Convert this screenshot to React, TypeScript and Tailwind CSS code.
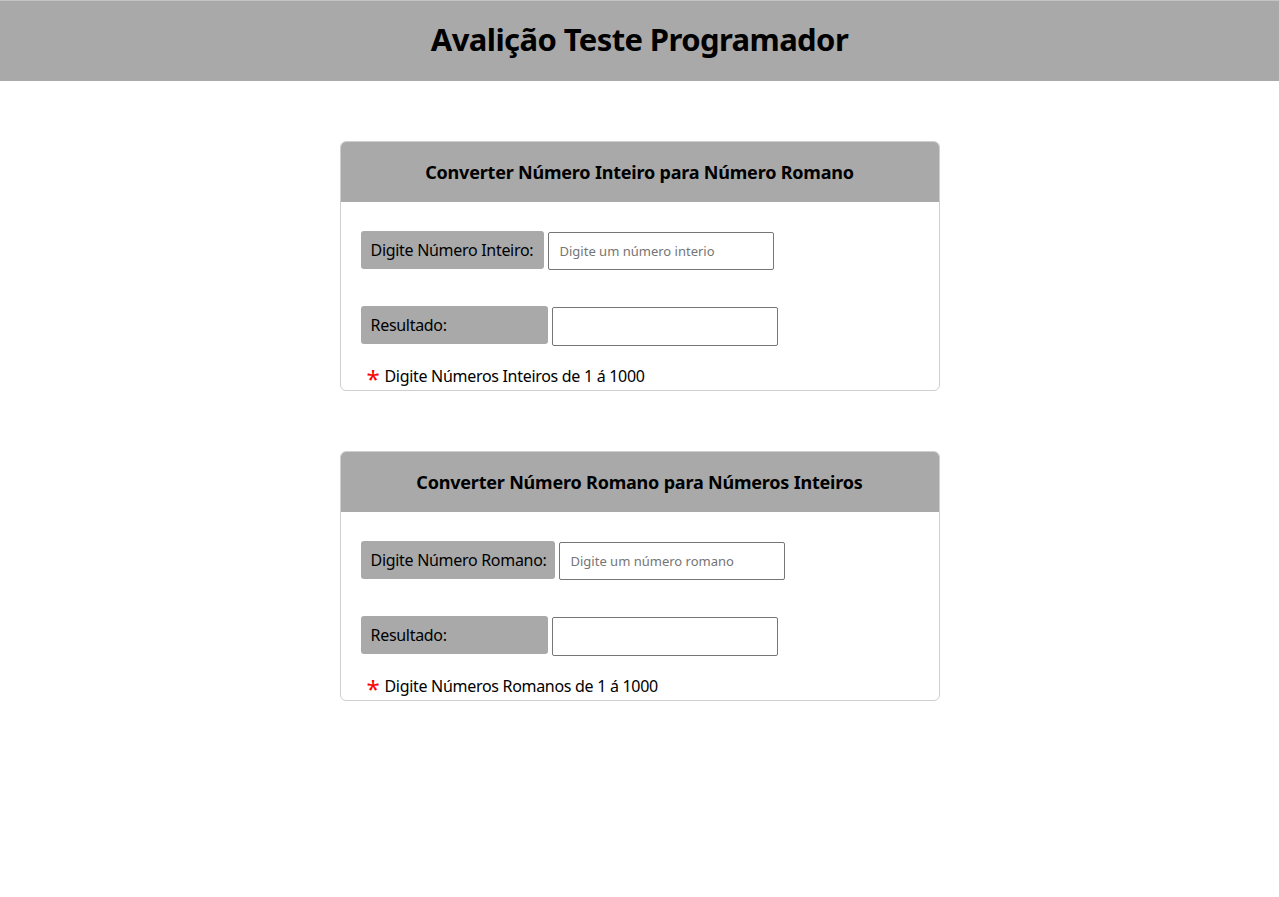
import { useState } from "react";

type Row = {
  title: string;
  inputLabel: string;
  labelWidth: string;
  placeholder: string;
  note: string;
};

const cards: Row[] = [
  {
    title: "Converter Número Inteiro para Número Romano",
    inputLabel: "Digite Número Inteiro:",
    labelWidth: "w-[183px]",
    placeholder: "Digite um número interio",
    note: "Digite Números Inteiros de 1 á 1000",
  },
  {
    title: "Converter Número Romano para Números Inteiros",
    inputLabel: "Digite Número Romano:",
    labelWidth: "w-[194px]",
    placeholder: "Digite um número romano",
    note: "Digite Números Romanos de 1 á 1000",
  },
];

function ConverterCard({ card }: { card: Row }) {
  const [value, setValue] = useState("");

  return (
    <div className="w-[600px] rounded-[6px] border border-[#cfcfcf] overflow-hidden">
      {/* header */}
      <div className="h-[60px] bg-[#a9a9a9] flex items-center justify-center">
        <h2 className="text-[18px] font-bold text-black tracking-[-0.2px]">{card.title}</h2>
      </div>

      {/* body */}
      <div className="px-[20px] pt-[29px] pb-[2px] flex flex-col">
        <div className="flex items-start gap-[4px]">
          <label
            className={`${card.labelWidth} h-[38px] bg-[#a9a9a9] rounded-[3px] pl-[10px] flex items-center text-[16px] text-black whitespace-nowrap tracking-[-0.3px]`}
          >
            {card.inputLabel}
          </label>
          <input
            value={value}
            onChange={(e) => setValue(e.target.value)}
            placeholder={card.placeholder}
            className="mt-px w-[226px] h-[38px] border border-[#767676] rounded-[2px] px-[11px] text-[13px] text-black placeholder:text-[#757575] outline-none"
          />
        </div>

        <div className="flex items-start gap-[4px] mt-[36px]">
          <label className="w-[187px] h-[38px] bg-[#a9a9a9] rounded-[3px] pl-[10px] flex items-center text-[16px] text-black tracking-[-0.3px]">
            Resultado:
          </label>
          <input
            readOnly
            className="mt-px w-[226px] h-[39px] border border-[#767676] rounded-[2px] px-[11px] text-[13px] outline-none"
          />
        </div>

        <p className="mt-[18px] h-[24px] pl-[6px] flex items-center gap-[5px] text-[16px] text-black tracking-[-0.3px]">
          <span className="text-[#ff0000] text-[24px] leading-none translate-y-[3px]">*</span>
          <span>{card.note}</span>
        </p>
      </div>
    </div>
  );
}

export default function App() {
  return (
    <div className="min-h-[897px] bg-white font-['Noto_Sans','Open_Sans',sans-serif]">
      <header className="h-[81px] bg-[#a9a9a9] border-t border-[#c4c4c4] flex items-center justify-center pb-[3px]">
        <h1 className="text-[31px] font-bold text-black tracking-[-0.6px]">Avalição Teste Programador</h1>
      </header>

      <main className="flex flex-col items-center pt-[60px] gap-[60px]">
        {cards.map((c) => (
          <ConverterCard key={c.title} card={c} />
        ))}
      </main>
    </div>
  );
}
